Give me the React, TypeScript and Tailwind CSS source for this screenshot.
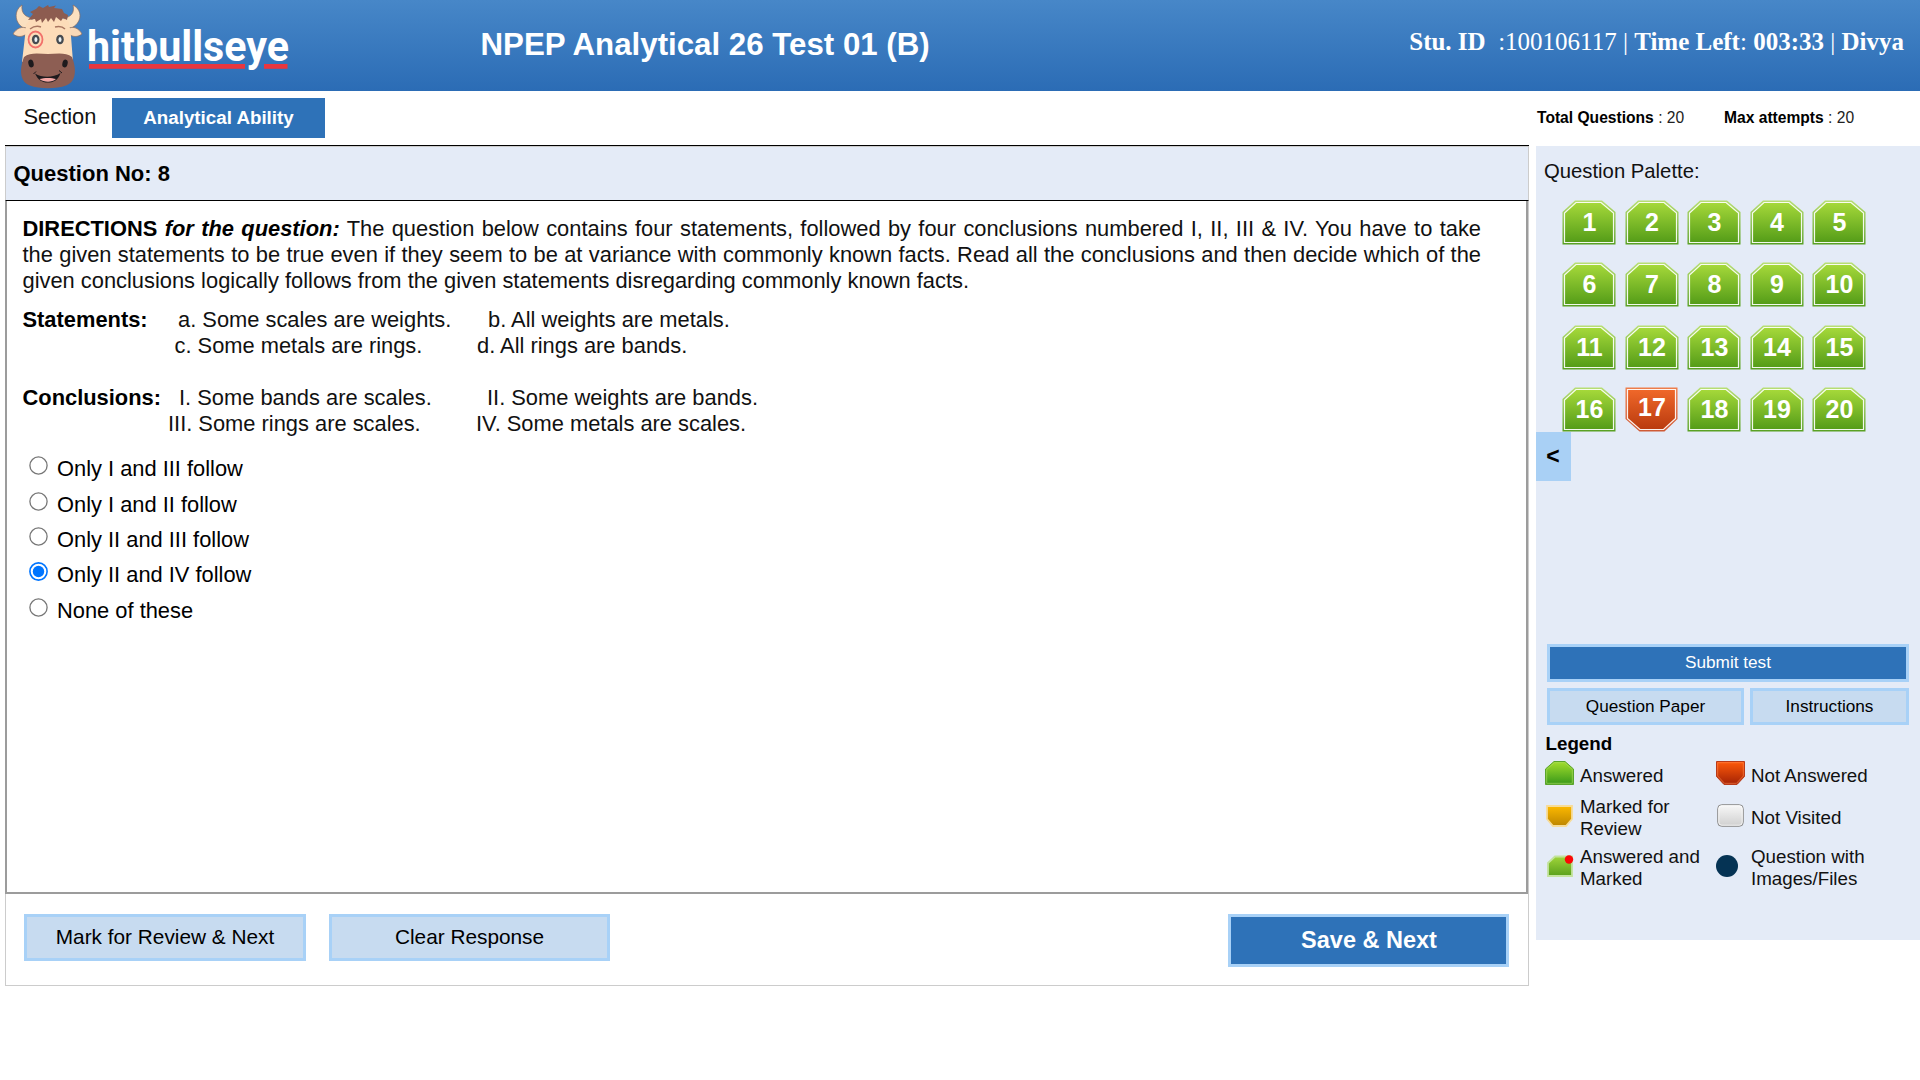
import React from "react";

type Status = "answered" | "notAnswered";

const GREEN_SHAPE = "13,0.5 40,0.5 53.5,12 53.5,44.5 0.5,44.5 0.5,12";
const GREEN_INNER = "14,2.5 39,2.5 51.5,13 51.5,42.5 2.5,42.5 2.5,13";
const RED_SHAPE = "0.5,0.5 52.5,0.5 52.5,32 39.5,44.5 14.5,44.5 0.5,32";
const RED_INNER = "2.5,2.5 50.5,2.5 50.5,31.5 38.5,42.5 15,42.5 2.5,31.5";

function BullLogo() {
  return (
    <svg className="block h-[91px] w-[300px]" viewBox="0 0 300 91">
      <path d="M24 28 C15 24 13 11 22 5 C21 14 26 17 32 18 L31 27Z" fill="#fbe0c0" stroke="#8a6a5c" strokeWidth="0.7" />
      <path d="M71 28 C81 24 84 11 73 5 C75 14 70 17 64 18 L66 27Z" fill="#fbe0c0" stroke="#8a6a5c" strokeWidth="0.7" />
      <path d="M28 29 C22 25 16 29 13 34 C18 38 24 37 29 32Z" fill="#fad9b8" stroke="#8a6a5c" strokeWidth="0.7" />
      <path d="M67 29 C74 25 79 29 82 34 C77 38 71 37 66 32Z" fill="#fad9b8" stroke="#8a6a5c" strokeWidth="0.7" />
      <path d="M26 24 C34 14 61 14 69 22 L71 36 L73 62 L22 62 L25 36Z" fill="#fddcb9" />
      <path d="M28 20 L33 14 L30 12 L36 9 L39 6 L43 8 L48 5 L49 7 L56 5.500 L54 8 L62 9 L64 13 L68 15 L67 20 L63 18 L61 21 L56 17 L54 22 L51 18 L48 22 L46 18 L42 23 L41 19 L36 22 L35 19Z" fill="#8d5c50" />
      <path d="M24 57 C30 52 40 54 48 54 C56 54 66 52 72 57 C77 70 76 82 66 85.500 C57 89 39 89 30 85.500 C20 82 19 70 24 57Z" fill="#8d5e53" />
      <path d="M30 29 C34 26 38 26 41 27" fill="none" stroke="#a87560" strokeWidth="1.500" />
      <path d="M55 27 C59 26 63 27 65 29" fill="none" stroke="#a87560" strokeWidth="1.500" />
      <ellipse cx="35.500" cy="39.500" rx="7" ry="8" fill="none" stroke="#f2706a" strokeWidth="1.800" />
      <ellipse cx="35.700" cy="39.500" rx="3.800" ry="4.800" fill="#454a50" />
      <ellipse cx="60" cy="39.500" rx="3.800" ry="4.800" fill="#454a50" />
      <ellipse cx="35.900" cy="39.500" rx="1.500" ry="2.500" fill="#e9f1f5" />
      <ellipse cx="60" cy="39.500" rx="1.500" ry="2.500" fill="#e9f1f5" />
      <ellipse cx="31" cy="63.500" rx="2.600" ry="4" fill="#1d1a1d" transform="rotate(-15 31 63.500)" />
      <ellipse cx="65" cy="63.500" rx="2.600" ry="4" fill="#1d1a1d" transform="rotate(15 65 63.500)" />
      <path d="M35 73.500 C42 78 53 78 60.500 73 C58 81 53 82.500 47.500 82.500 C42 82.500 38 80 35 73.500Z" fill="#1d1a1d" />
      <path d="M39.500 79 C44 77.500 52 77.500 56 79 C52 82.500 44 82.500 39.500 79Z" fill="#f4a6a4" />
      <path d="M33.500 74 L36 71.500 M59 70.500 L62 73" stroke="#1d1a1d" strokeWidth="1" />
      <rect x="89" y="64" width="156" height="4.800" fill="#e8363f" />
      <rect x="264" y="64" width="23.500" height="4.800" fill="#e8363f" />
      <text
        x="87"
        y="60.500"
        textLength="202"
        lengthAdjust="spacingAndGlyphs"
        fill="#fff"
        fontFamily="Roboto, sans-serif"
        fontSize="42"
        fontWeight="700"
      >
        hitbullseye
      </text>
    </svg>
  );
}

function PaletteButton({ n, status }: { n: number; status: Status }) {
  const red = status === "notAnswered";
  return (
    <div className="relative h-[45px] w-[54px]">
      <svg className="absolute inset-0 h-[45px] w-[54px]" viewBox="0 0 54 45">
        <polygon points={red ? RED_SHAPE : GREEN_SHAPE} fill={red ? "url(#redEdge)" : "url(#greenEdge)"} />
        <polygon
          points={red ? RED_INNER : GREEN_INNER}
          fill={red ? "url(#redFill)" : "url(#greenFill)"}
          stroke="#fff"
          strokeOpacity="0.92"
          strokeWidth="1.200"
        />
      </svg>
      <span
        className={
          "relative block pl-px text-center text-[25px] leading-[28px] font-bold text-white " +
          (red ? "pt-[6px]" : "pt-[8px]")
        }
      >
        {n}
      </span>
    </div>
  );
}

function Defs() {
  const grads = [
    ["greenFill", "#a6d93a", "#549c18"],
    ["greenEdge", "#b9df75", "#58a022"],
    ["redFill", "#f0682a", "#b93a0e"],
    ["redEdge", "#ee7d4b", "#cf5a35"],
    ["lgGreen", "#a3de2c", "#38981a"],
    ["lgRed", "#ff5a0a", "#a32205"],
    ["lgAmber", "#fdb900", "#bd8600"],
    ["lgGrey", "#f8f8f8", "#cfcfcf"],
    ["lgLime", "#a0d53a", "#5aa01c"],
  ];
  return (
    <svg className="absolute h-0 w-0">
      <defs>
        {grads.map(([id, a, b]) => (
          <linearGradient key={id} id={id} x1="0" y1="0" x2="0" y2="1">
            <stop offset="0" stopColor={a} />
            <stop offset="1" stopColor={b} />
          </linearGradient>
        ))}
      </defs>
    </svg>
  );
}

function Header() {
  return (
    <header className="flex h-[91px] bg-linear-to-b from-[#4787c8] to-[#2b6cb5] text-white">
      <div className="w-[480.5px]">
        <BullLogo />
      </div>
      <h1 className="pt-[27px] text-[31.25px] leading-[36px] font-bold whitespace-nowrap">NPEP Analytical 26 Test 01 (B)</h1>
      <div className="mr-[16px] ml-auto pt-[27px] font-['Liberation_Serif',serif] text-[25px] leading-[29px] whitespace-pre">
        <b>Stu. ID</b>
        {"\u00a0 :100106117 | "}
        <b>Time Left</b>
        {": "}
        <b>003:33</b>
        {" | "}
        <b>Divya</b>
      </div>
    </header>
  );
}

function SectionBar() {
  return (
    <div className="flex h-[54px]">
      <div className="w-[112px] pt-[14px] pl-[23.5px] text-[21.875px] leading-[24px] text-[#111]">Section</div>
      <div className="mt-[7px] h-[40px] w-[213px] bg-[#2e72b8] text-center text-[18.75px] leading-[39px] font-bold text-white">
        Analytical Ability
      </div>
      <div className="ml-auto flex w-[383px] pt-[17px] text-[15.625px] leading-[20px] whitespace-pre text-[#222]">
        <div className="w-[187px]">
          <b className="text-black">Total Questions</b> : 20
        </div>
        <div>
          <b className="text-black">Max attempts</b> : 20
        </div>
      </div>
    </div>
  );
}

const OPTIONS = ["Only I and III follow", "Only I and II follow", "Only II and III follow", "Only II and IV follow", "None of these"];

function Cells({ label, indent, first, gap, second }: { label?: string; indent: string; first: string; gap: string; second: string }) {
  return (
    <div className="flex whitespace-pre">
      <div className={indent}>{label && <b className="text-black">{label}</b>}</div>
      <div className={gap}>{first}</div>
      <div>{second}</div>
    </div>
  );
}

function Radio({ checked }: { checked: boolean }) {
  const color = checked ? "#0075ff" : "#767676";
  return (
    <svg className="mt-[4px] h-[19px] w-[19px]" viewBox="0 0 19 19">
      <circle cx="9.500" cy="9.500" r="8.600" fill="#fff" stroke={color} strokeWidth={checked ? 1.6 : 1.3} />
      {checked && <circle cx="9.500" cy="9.500" r="5.700" fill={color} />}
    </svg>
  );
}

function Question() {
  return (
    <main className="ml-[5px] h-[841px] w-[1524px] border-t border-black">
      <div className="h-[840px] border border-t-0 border-[#ccc]">
        <div className="-mx-px h-[55px] border-x border-b border-x-[#ccc] border-b-black bg-[#e4ebf7] pt-[15px] pl-[7.5px] text-[22px] leading-[25px] font-bold shadow-[inset_0_1px_0_#ccc]">
          Question No: 8
        </div>
        <div className="-ml-px h-[693px] w-[1523px] border-2 border-t-0 border-[#9c9c9c] pt-[15px] pl-[15.5px] text-[21.875px] leading-[26px] text-[#111]">
          <p className="w-[1458.5px] text-justify">
            <b className="text-black">
              DIRECTIONS <i>for the question:</i>
            </b>{" "}
            The question below contains four statements, followed by four conclusions numbered I, II, III &amp; IV. You have to take the given statements
            to be true even if they seem to be at variance with commonly known facts. Read all the conclusions and then decide which of the given
            conclusions logically follows from the given statements disregarding commonly known facts.
          </p>
          <div className="pt-[13px]">
            <Cells label="Statements:" indent="w-[155.5px]" first="a. Some scales are weights." gap="w-[310px]" second="b. All weights are metals." />
            <Cells indent="w-[152px]" first="c. Some metals are rings." gap="w-[302.5px]" second="d. All rings are bands." />
          </div>
          <div className="pt-[26px]">
            <Cells label="Conclusions:" indent="w-[156.5px]" first="I. Some bands are scales." gap="w-[308px]" second="II. Some weights are bands." />
            <Cells indent="w-[145.5px]" first="III. Some rings are scales." gap="w-[308px]" second="IV. Some metals are scales." />
          </div>
          <div className="flex flex-col pt-[15.2px] pl-[6.5px]">
            {OPTIONS.map((o, i) => (
              <label key={o} className="flex h-[35.4px] items-start">
                <Radio checked={i === 3} />
                <span className="pt-[4px] pl-[9px] text-black">{o}</span>
              </label>
            ))}
          </div>
        </div>
        <div className="flex items-start pt-[20px] pr-[19px] pl-[18px] text-[20.8px] text-black">
          <button className="h-[47px] w-[282px] border-3 border-[#a8d1f7] bg-[#c7dbf0] pb-[2px]">Mark for Review &amp; Next</button>
          <button className="ml-[23px] h-[47px] w-[281px] border-3 border-[#a8d1f7] bg-[#c7dbf0] pb-[2px]">Clear Response</button>
          <button className="ml-auto h-[53px] w-[281px] border-3 border-[#a8d1f7] bg-[#2e72b8] pb-px pl-px text-[23.5px] leading-[27px] font-bold text-white">
            Save &amp; Next
          </button>
        </div>
      </div>
    </main>
  );
}

function LegendRow({ a, b, at, bt, className }: { a: React.ReactNode; b: React.ReactNode; at: React.ReactNode; bt: React.ReactNode; className: string }) {
  return (
    <div className={"flex items-center " + className}>
      <div className="w-[36px]">{a}</div>
      <div className="w-[135px]">{at}</div>
      <div className="w-[36px]">{b}</div>
      <div>{bt}</div>
    </div>
  );
}

function Sidebar() {
  return (
    <aside className="mt-px ml-[7px] h-[794px] w-[384px] bg-[#e4ebf7]">
      <div className="h-[53.9px] pt-[13px] pl-[8px] text-[20.3px] leading-[24px] text-[#111]">Question Palette:</div>
      <div className="grid h-[232.1px] auto-rows-[62.5px] grid-cols-[repeat(5,62.5px)] pl-[26px]">
        {Array.from({ length: 20 }, (_, i) => (
          <PaletteButton key={i} n={i + 1} status={i === 16 ? "notAnswered" : "answered"} />
        ))}
      </div>
      <div className="h-[49px] w-[35px] bg-[#a9d0f5] pr-px text-center text-[23px] leading-[48px] font-bold">&lt;</div>
      <div className="px-[11px] pt-[163px] text-[17.2px]">
        <button className="h-[38px] w-full border-3 border-[#a8d1f7] bg-[#2e72b8] pb-[2px] leading-[20px] text-white">Submit test</button>
        <div className="mt-[6px] flex gap-[6px]">
          <button className="h-[37px] w-[197px] border-3 border-[#a8d1f7] bg-[#c7dbf0] pb-px leading-[20px]">Question Paper</button>
          <button className="h-[37px] w-[159px] border-3 border-[#a8d1f7] bg-[#c7dbf0] pb-px leading-[20px]">Instructions</button>
        </div>
      </div>
      <div className="pt-[8px] pl-[8px] text-[18.75px] leading-[22px] text-[#111]">
        <div className="pl-[1.5px] font-bold text-black">Legend</div>
        <LegendRow
          className="h-[42px]"
          a={
            <svg className="-mt-[5px] ml-px block h-[24px] w-[29px]" viewBox="0 0 29 24">
              <path d="M9 .500H20L28.500 8V23.500H.500V8Z" fill="url(#lgGreen)" stroke="#5aa42c" />
              <path d="M9.500 1.700H19.500L27.300 8.500V22.300H1.700V8.500Z" fill="none" stroke="#a5d860" strokeOpacity=".7" />
            </svg>
          }
          at="Answered"
          b={
            <svg className="-mt-[5px] ml-px block h-[24px] w-[29px]" viewBox="0 0 29 24">
              <path d="M.500 .500H28.500V15.500L21 23.500H8L.500 15.500Z" fill="url(#lgRed)" stroke="#b93a18" />
              <path d="M1.700 1.700H27.300V15L20.500 22.300H8.500L1.700 15Z" fill="none" stroke="#ff8a50" strokeOpacity=".6" />
            </svg>
          }
          bt="Not Answered"
        />
        <LegendRow
          className="h-[44px]"
          a={
            <svg className="-mt-[5px] ml-[2px] block h-[22px] w-[27px]" viewBox="0 0 27 22">
              <path d="M1 1H26V14L20 21H7L1 14Z" fill="url(#lgAmber)" stroke="#f7dc98" strokeWidth="1.800" />
            </svg>
          }
          at={
            <div className="-mt-[2px]">
              Marked for
              <br />
              Review
            </div>
          }
          b={
            <svg className="-mt-[7px] ml-[2px] block h-[23px] w-[27px]" viewBox="0 0 27 23">
              <rect x=".700" y=".700" width="25.600" height="21.600" rx="4" fill="url(#lgGrey)" stroke="#8c8c8c" />
              <rect x="1.800" y="1.800" width="23.400" height="19.400" rx="3" fill="none" stroke="#fff" strokeOpacity=".7" />
            </svg>
          }
          bt={<div className="-mt-[2px]">Not Visited</div>}
        />
        <LegendRow
          className="-mt-[4px] h-[58px] pt-[3px]"
          a={
            <svg className="-mt-[2px] ml-[2.5px] block h-[22px] w-[27px]" viewBox="0 0 27 22">
              <path d="M8 1.500H25V21H1V8Z" fill="url(#lgLime)" stroke="#c3e39d" strokeWidth="1.800" />
              <circle cx="22" cy="4.500" r="4.200" fill="#fb0707" />
            </svg>
          }
          at={
            <div className="pt-px">
              Answered and
              <br />
              Marked
            </div>
          }
          b={<div className="-mt-[2px] ml-px h-[22px] w-[22px] rounded-full bg-[#053354]" />}
          bt={
            <div className="pt-px">
              Question with
              <br />
              Images/Files
            </div>
          }
        />
      </div>
    </aside>
  );
}

export default function App() {
  return (
    <div className="h-[1080px] w-[1920px] overflow-hidden bg-white font-['Liberation_Sans',Arial,sans-serif] text-black">
      <Defs />
      <Header />
      <SectionBar />
      <div className="flex items-start">
        <Question />
        <Sidebar />
      </div>
    </div>
  );
}
